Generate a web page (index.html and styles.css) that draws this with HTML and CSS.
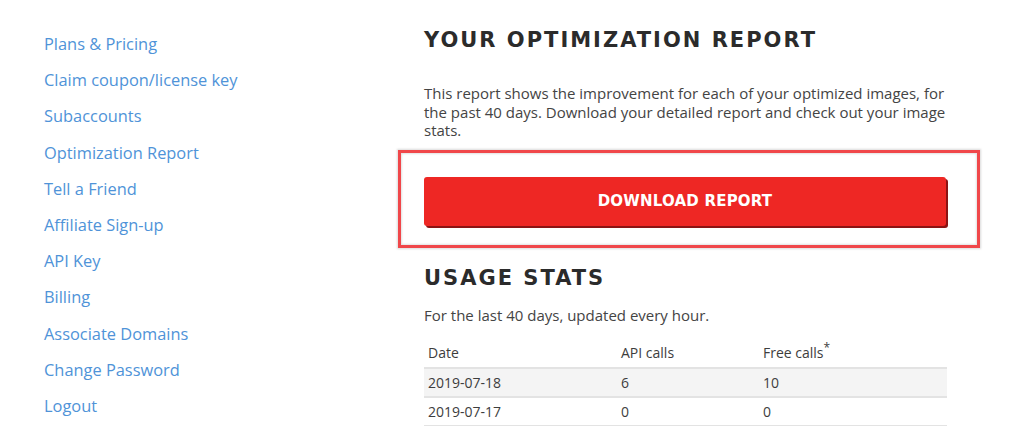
FILE: index.html
```html
<!DOCTYPE html>
<html lang="en">
<head>
<meta charset="utf-8">
<title>Optimization Report</title>
<link rel="stylesheet" href="styles.css">
</head>
<body>
<div class="page">
  <nav class="sidebar">
    <a href="#">Plans &amp; Pricing</a>
    <a href="#">Claim coupon/license key</a>
    <a href="#">Subaccounts</a>
    <a href="#">Optimization Report</a>
    <a href="#">Tell a Friend</a>
    <a href="#">Affiliate Sign-up</a>
    <a href="#">API Key</a>
    <a href="#">Billing</a>
    <a href="#">Associate Domains</a>
    <a href="#">Change Password</a>
    <a href="#">Logout</a>
  </nav>
  <main class="main">
    <h1 class="heading">YOUR OPTIMIZATION REPORT</h1>
    <p class="intro">This report shows the improvement for each of your optimized images, for the past 40 days. Download your detailed report and check out your image stats.</p>
    <div class="highlight">
      <button class="download">DOWNLOAD REPORT</button>
    </div>
    <h2 class="heading heading-sm">USAGE STATS</h2>
    <p class="note">For the last 40 days, updated every hour.</p>
    <table class="stats">
      <thead>
        <tr><th class="c1">Date</th><th class="c2">API calls</th><th class="c3">Free calls<sup>*</sup></th></tr>
      </thead>
      <tbody>
        <tr class="odd"><td>2019-07-18</td><td>6</td><td>10</td></tr>
        <tr><td>2019-07-17</td><td>0</td><td>0</td></tr>
      </tbody>
    </table>
  </main>
</div>
</body>
</html>
```

FILE: styles.css
```css
html, body {
  margin: 0;
  padding: 0;
  background: #ffffff;
}
body {
  font-family: "Open Sans", "Liberation Sans", sans-serif;
  color: #444444;
}
.page {
  display: flex;
  align-items: flex-start;
}
.sidebar {
  width: 424px;
  flex-shrink: 0;
  padding: 32px 0 0 44px;
  box-sizing: border-box;
  display: flex;
  flex-direction: column;
  align-items: flex-start;
}
.sidebar a {
  color: #4f93d8;
  text-decoration: none;
  font-size: 16.4px;
  line-height: 24px;
  margin-bottom: 12.2px;
}
.main {
  width: 523px;
  flex-shrink: 0;
  padding-top: 26px;
}
.heading {
  margin: 0;
  font-family: "DejaVu Sans", sans-serif;
  font-weight: bold;
  font-size: 21px;
  letter-spacing: 2px;
  color: #2b2b2b;
  line-height: 28px;
}
.intro {
  margin: 30px 0 0 0;
  font-size: 15px;
  line-height: 18.5px;
}
.highlight {
  margin: 10px -33px 0 -26px;
  border: 3px solid #f0474a;
  box-shadow: 0 0 2px 1px rgba(0,0,0,0.15), inset 0 0 2px 1px rgba(0,0,0,0.12);
  padding: 24px 31px 19px 23px;
}
.download {
  display: block;
  width: 100%;
  height: 49px;
  border: none;
  border-radius: 3px;
  background: #ee2724;
  box-shadow: 2px 2px 0 #8c1414;
  color: #ffffff;
  font-family: "DejaVu Sans", sans-serif;
  font-weight: bold;
  font-size: 15px;
  letter-spacing: 0.2px;
}
.heading-sm {
  margin-top: 16px;
}
.note {
  margin: 13px 0 0 0;
  font-size: 15px;
  line-height: 20px;
}
.stats {
  margin-top: 14px;
  width: 100%;
  border-collapse: collapse;
  font-size: 14px;
  color: #3d3d3d;
}
.stats th, .stats td {
  text-align: left;
  font-weight: normal;
  padding: 4px 4px;
  height: 19px;
  border-bottom: 2px solid #e3e3e3;
}
.stats th {
  height: 20px;
}
.stats .c1 { width: 185px; }
.stats .c2 { width: 134px; }
.stats sup {
  font-size: 12px;
  line-height: 0;
}
.stats tr.odd td {
  background: #f4f4f4;
}
```
